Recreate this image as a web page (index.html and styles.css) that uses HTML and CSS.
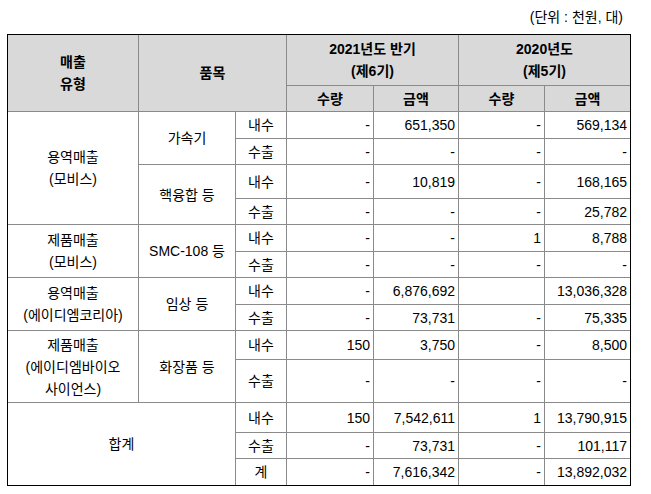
FILE: index.html
```html
<!DOCTYPE html>
<html lang="ko">
<head>
<meta charset="utf-8">
<title>매출 실적</title>
<link rel="stylesheet" href="styles.css">
</head>
<body>
<div class="unit">(단위 : 천원, 대)</div>
<div class="frame">
  <div class="grid">
    <div class="c h r2">매출<br>유형</div>
    <div class="c h r2 s2">품목</div>
    <div class="c h s2">2021년도 반기<br>(제6기)</div>
    <div class="c h s2">2020년도<br>(제5기)</div>
    <div class="c h">수량</div>
    <div class="c h">금액</div>
    <div class="c h">수량</div>
    <div class="c h">금액</div>

    <div class="c r4">용역매출<br>(모비스)</div>
    <div class="c r2">가속기</div>
    <div class="c">내수</div><div class="c n">-</div><div class="c n">651,350</div><div class="c n">-</div><div class="c n">569,134</div>
    <div class="c">수출</div><div class="c n">-</div><div class="c n">-</div><div class="c n">-</div><div class="c n">-</div>
    <div class="c r2">핵융합 등</div>
    <div class="c">내수</div><div class="c n">-</div><div class="c n">10,819</div><div class="c n">-</div><div class="c n">168,165</div>
    <div class="c">수출</div><div class="c n">-</div><div class="c n">-</div><div class="c n">-</div><div class="c n">25,782</div>

    <div class="c r2">제품매출<br>(모비스)</div>
    <div class="c r2">SMC-108 등</div>
    <div class="c">내수</div><div class="c n">-</div><div class="c n">-</div><div class="c n">1</div><div class="c n">8,788</div>
    <div class="c">수출</div><div class="c n">-</div><div class="c n">-</div><div class="c n">-</div><div class="c n">-</div>

    <div class="c r2">용역매출<br>(에이디엠코리아)</div>
    <div class="c r2">임상 등</div>
    <div class="c">내수</div><div class="c n">-</div><div class="c n">6,876,692</div><div class="c n"></div><div class="c n">13,036,328</div>
    <div class="c">수출</div><div class="c n">-</div><div class="c n">73,731</div><div class="c n">-</div><div class="c n">75,335</div>

    <div class="c r2">제품매출<br>(에이디엠바이오<br>사이언스)</div>
    <div class="c r2">화장품 등</div>
    <div class="c">내수</div><div class="c n">150</div><div class="c n">3,750</div><div class="c n">-</div><div class="c n">8,500</div>
    <div class="c">수출</div><div class="c n">-</div><div class="c n">-</div><div class="c n">-</div><div class="c n">-</div>

    <div class="c r3 s2">합계</div>
    <div class="c">내수</div><div class="c n">150</div><div class="c n">7,542,611</div><div class="c n">1</div><div class="c n">13,790,915</div>
    <div class="c">수출</div><div class="c n">-</div><div class="c n">73,731</div><div class="c n">-</div><div class="c n">101,117</div>
    <div class="c">계</div><div class="c n">-</div><div class="c n">7,616,342</div><div class="c n">-</div><div class="c n">13,892,032</div>
  </div>
</div>
</body>
</html>
```
FILE: styles.css
```css
html, body {
  margin: 0;
  padding: 0;
  background: #ffffff;
}
body {
  font-family: "Liberation Sans", "Noto Sans CJK KR", sans-serif;
  font-size: 14px;
  color: #000000;
}
.unit {
  width: 623px;
  height: 34px;
  box-sizing: border-box;
  padding-top: 6px;
  line-height: 22px;
  text-align: right;
}
.frame {
  margin-left: 7px;
  width: 622px;
  border: 1px solid #000000;
}
.grid {
  display: grid;
  grid-template-columns: 130px 96px 50px 86px 84px 85px 85px;
  grid-template-rows: 50px 25px 26px 25px 33px 25px 26px 25px 26px 25px 28px 42px 29px 25px 26px;
  gap: 1px;
  background: #8a8a8a;
}
.c {
  background: #ffffff;
  display: flex;
  align-items: center;
  justify-content: center;
  text-align: center;
  line-height: 22px;
  white-space: nowrap;
  overflow: hidden;
}
.h {
  background: #d9d9d9;
  font-weight: bold;
}
.n {
  justify-content: flex-end;
  padding-right: 3px;
}
.r2 { grid-row: span 2; }
.r3 { grid-row: span 3; }
.r4 { grid-row: span 4; }
.s2 { grid-column: span 2; }
```
